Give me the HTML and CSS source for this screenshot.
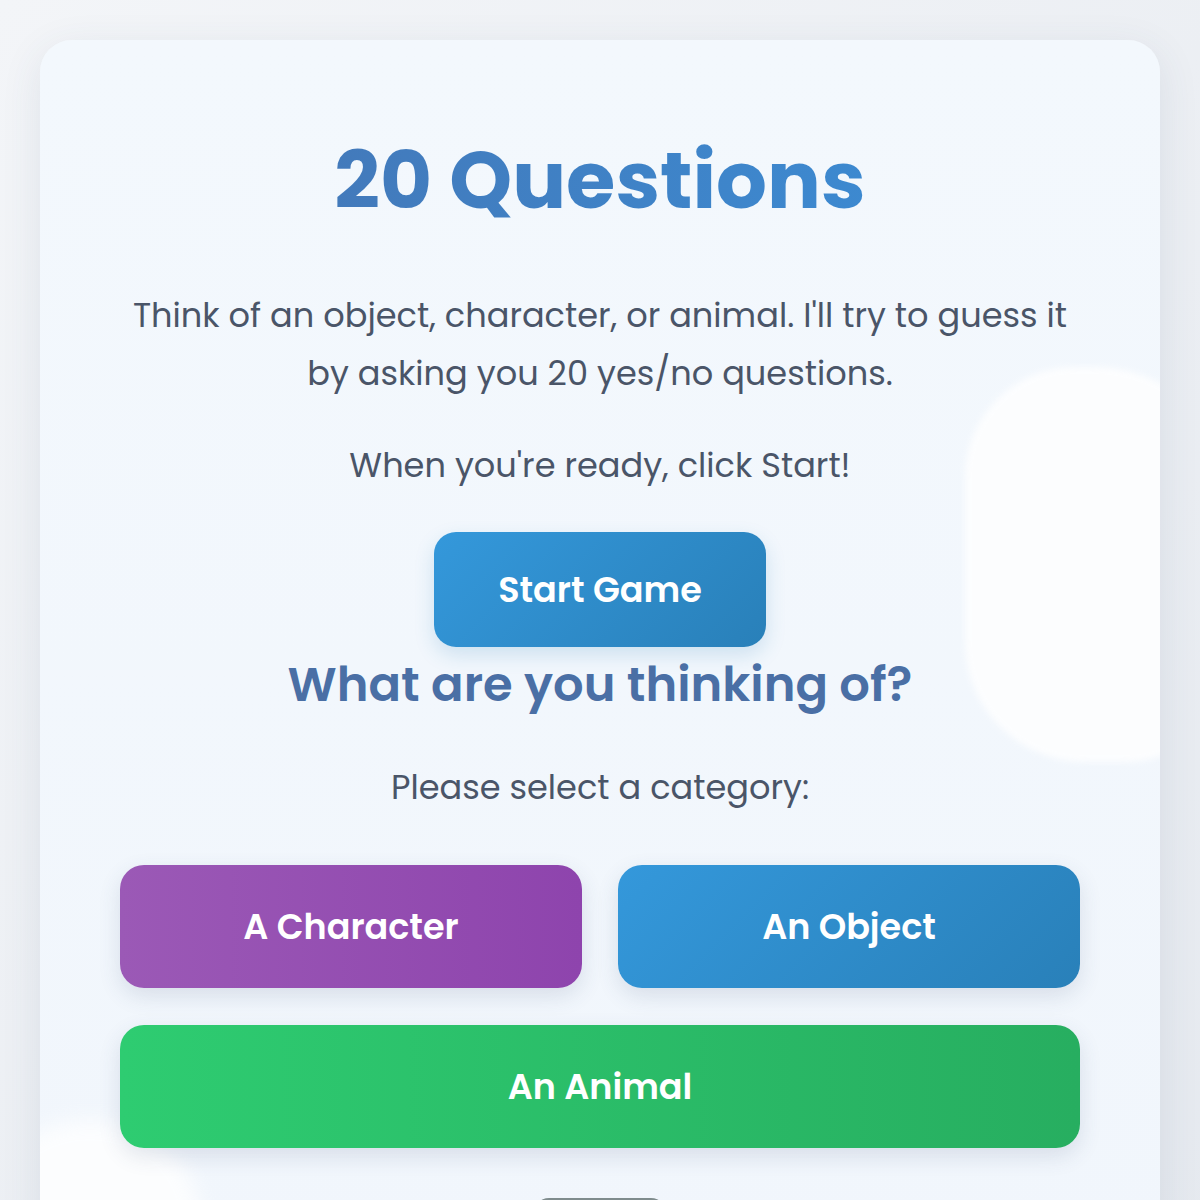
FILE: index.html
```html
<!DOCTYPE html>
<html lang="en">
<head>
<meta charset="utf-8">
<title>20 Questions</title>
<link rel="stylesheet" href="styles.css">
</head>
<body>
<main class="card">
  <div class="deco deco-right"></div>
  <div class="deco deco-left"></div>
  <section class="intro">
    <h1 class="title">20 Questions</h1>
    <p class="lead">Think of an object, character, or animal. I'll try to guess it by asking you 20 yes/no questions.</p>
    <p class="lead ready">When you're ready, click Start!</p>
    <button class="btn btn-start">Start Game</button>
  </section>
  <section class="category">
    <h2 class="subtitle">What are you thinking of?</h2>
    <p class="lead prompt">Please select a category:</p>
    <div class="choices">
      <button class="btn choice choice-character">A Character</button>
      <button class="btn choice choice-object">An Object</button>
      <button class="btn choice choice-animal">An Animal</button>
    </div>
    <button class="btn btn-back">Back</button>
  </section>
</main>
</body>
</html>
```
FILE: styles.css
```css
* { box-sizing: border-box; }
html, body { margin: 0; }
body {
  font-family: "Poppins", "Inter", "Noto Sans", sans-serif;
  background: linear-gradient(135deg, #f3f5f8 0%, #e5e9ef 100%);
  padding: 40px 40px 0;
  min-height: 1200px;
  color: #4a5568;
}
.card {
  position: relative;
  overflow: hidden;
  background: linear-gradient(180deg, #f3f8fd 0%, #f1f6fc 100%);
  border-radius: 32px 32px 0 0;
  box-shadow: 0 10px 40px rgba(60, 80, 110, 0.10);
  padding: 80px 80px 40px;
  min-height: 1160px;
  text-align: center;
}
.deco {
  position: absolute;
  background: #ffffff;
  opacity: 0.8;
  filter: blur(3px);
  pointer-events: none;
}
.deco-right {
  left: 925px;
  top: 327px;
  width: 270px;
  height: 395px;
  border-radius: 110px 140px 110px 120px;
}
.deco-left {
  left: -60px;
  top: 1080px;
  width: 220px;
  height: 200px;
  border-radius: 50%;
  filter: blur(10px);
}
.intro, .category { position: relative; }
.title {
  margin: 12px 0 0;
  font-size: 80px;
  line-height: 96px;
  font-weight: 700;
  background: linear-gradient(90deg, #4574b3 0%, #3a8fd8 100%);
  -webkit-background-clip: text;
  background-clip: text;
  color: transparent;
}
.lead {
  font-size: 33.6px;
  line-height: 58px;
  color: #4a5568;
  margin: 0;
}
.intro .lead:first-of-type { margin-top: 59px; }
.ready { margin-top: 34px; }
.btn {
  font-family: inherit;
  border: none;
  color: #ffffff;
  font-weight: 600;
  cursor: pointer;
}
.btn-start {
  margin-top: 37px;
  width: 332px;
  height: 115px;
  font-size: 35px;
  border-radius: 22px;
  background: linear-gradient(135deg, #3498db 0%, #2980b9 100%);
  box-shadow: 0 8px 20px rgba(41, 128, 185, 0.18);
}
.subtitle {
  margin: 10px 0 0;
  font-size: 48px;
  line-height: 56px;
  font-weight: 600;
  color: #4a6fa5;
}
.prompt { margin-top: 46px; }
.choices {
  margin-top: 48px;
  display: grid;
  grid-template-columns: 1fr 1fr;
  gap: 37px 36px;
}
.choice {
  height: 123px;
  border-radius: 24px;
  font-size: 35px;
  box-shadow: 0 8px 22px rgba(60, 80, 110, 0.14);
}
.choice-character { background: linear-gradient(90deg, #9b59b6 0%, #8e44ad 100%); }
.choice-object { background: linear-gradient(135deg, #3498db 0%, #2980b9 100%); }
.choice-animal {
  grid-column: 1 / span 2;
  background: linear-gradient(90deg, #2ecc71 0%, #27ae60 100%);
}
.btn-back {
  margin-top: 50px;
  width: 134px;
  height: 60px;
  border-radius: 16px;
  background: #7f8c8d;
  font-size: 24px;
}
```
